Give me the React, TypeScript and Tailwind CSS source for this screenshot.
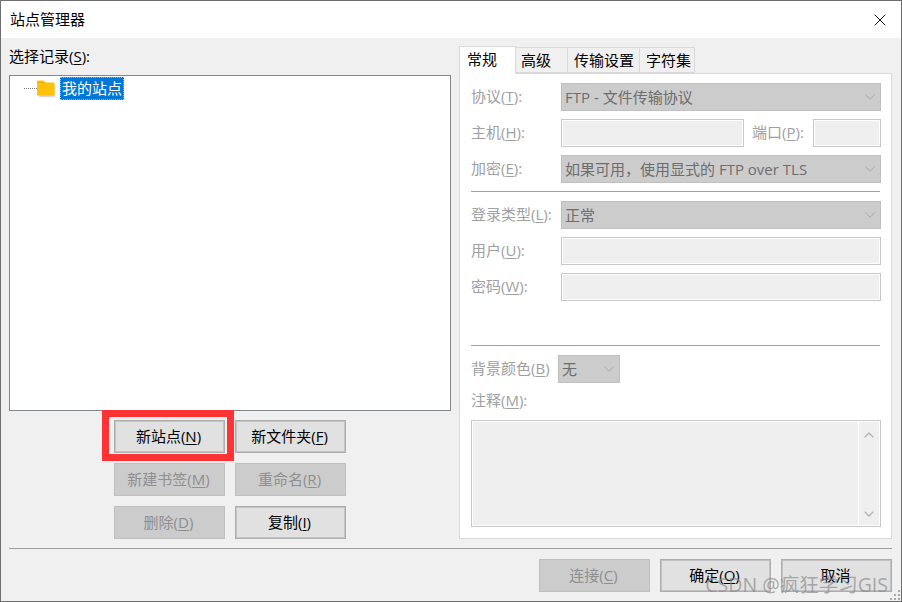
import { ReactNode } from 'react';
import { ChevronDown, ChevronUp, X } from 'lucide-react';

const font = { fontFamily: '"Open Sans", "Noto Sans CJK SC", sans-serif' };

function Hot({ children }: { children: ReactNode }) {
  return <span className="underline underline-offset-2 decoration-1">{children}</span>;
}

function Btn({ disabled, children, className = '' }: { disabled?: boolean; children: ReactNode; className?: string }) {
  return (
    <button
      className={`relative h-[33px] w-[111px] border pr-[2px] text-[15px] leading-none ${
        disabled
          ? 'border-[#bfbfbf] bg-[#cccccc] text-[#8f8f8f]'
          : 'border-[#adadad] bg-[#e1e1e1] text-black shadow-[inset_0_0_0_1px_#c4c4c4]'
      } ${className}`}>
      {children}
    </button>
  );
}

function Label({ children, className = 'w-[90px]' }: { children: ReactNode; className?: string }) {
  return <span className={`shrink-0 pb-[2px] text-[15px] text-[#a0a0a0] ${className}`}>{children}</span>;
}

function Select({ value, className = 'flex-1' }: { value: string; className?: string }) {
  return (
    <div className={`flex h-[28px] items-center justify-between border border-[#bfbfbf] bg-[#cccccc] pl-[3px] pr-[1px] text-[15px] text-[#6d6d6d] ${className}`}>
      <span>{value}</span>
      <ChevronDown size={18} strokeWidth={1} className="text-[#9c9c9c]" />
    </div>
  );
}

function Field({ className = 'flex-1' }: { className?: string }) {
  return <div className={`h-[28px] border border-[#c8c8c8] bg-[#efefef] shadow-[inset_0_0_0_1px_#ffffff] ${className}`} />;
}

function Tab({ active, className, children }: { active?: boolean; className: string; children: ReactNode }) {
  return (
    <div
      className={`flex items-center border border-[#d9d9d9] text-[15px] text-black ${
        active ? 'relative z-10 -mb-px h-[28px] border-b-0 bg-white pb-[3px]' : '-ml-px h-[26px] bg-[#f0f0f0]'
      } ${className}`}>
      {children}
    </div>
  );
}

export default function App() {
  return (
    <div style={font} className="relative flex h-[602px] w-[902px] flex-col overflow-hidden border border-[#6e6e6e] bg-[#f0f0f0]">
      {/* Title bar */}
      <div className="flex h-[37px] shrink-0 items-center justify-between bg-white pl-[9px] pr-[11px] text-[15px] text-black">
        <span className="pb-[1px]">站点管理器</span>
        <X size={20} strokeWidth={1.1} className="text-black" />
      </div>

      <div className="flex flex-1 flex-col pl-[8px] pr-[9px] pt-[8px]">
        <div className="flex gap-[8px]">
          {/* Site tree */}
          <div className="flex w-[442px] flex-col">
            <div className="h-[29px] text-[15px] leading-[20px] text-black">
              选择记录(<Hot>S</Hot>):
            </div>
            <div className="h-[336px] border border-[#828790] bg-white">
              <div className="flex h-[25px] items-center pl-[14px]">
                <div className="w-[13px] border-t border-dotted border-[#777777]" />
                <svg width="19" height="19" viewBox="0 0 19 19" className="shrink-0">
                  <path d="M1 3h6l2 2h9v13H1z" fill="#d9d9d9" transform="translate(1 1) scale(0.96)" />
                  <path d="M0 2.5C0 2 .4 1.500 1 1.500h5.500L8.500 3.500H17.500V16.500H0z" fill="#ffc107" />
                  <path d="M0 3.500h8.500" stroke="#e0a800" strokeWidth="0.6" />
                </svg>
                <span className="ml-[4px] flex h-[23px] items-center border border-dotted border-[#ff9a28] bg-[#0078d7] px-[1px] pb-[1px] text-[15px] text-white">
                  我的站点
                </span>
              </div>
            </div>
            <div className="mt-[9px] grid grid-cols-[111px_111px] justify-center gap-x-[10px] gap-y-[10px]">
              <Btn>
                新站点(<Hot>N</Hot>)
                <span className="absolute -bottom-[9px] -left-[13px] -right-[10px] -top-[11px] border-[7px] border-[#ff3333]" />
              </Btn>
              <Btn>新文件夹(<Hot>F</Hot>)</Btn>
              <Btn disabled>新建书签(<Hot>M</Hot>)</Btn>
              <Btn disabled>重命名(<Hot>R</Hot>)</Btn>
              <Btn disabled>删除(<Hot>D</Hot>)</Btn>
              <Btn>复制(<Hot>I</Hot>)</Btn>
            </div>
          </div>

          {/* Settings tabs */}
          <div className="flex w-[433px] flex-col">
            <div className="flex h-[27px] items-end">
              <Tab active className="w-[57px] pl-[7px]">常规</Tab>
              <Tab className="w-[53px] pl-[5px]">高级</Tab>
              <Tab className="w-[73px] pl-[6px]">传输设置</Tab>
              <Tab className="w-[56px] pl-[6px]">字符集</Tab>
            </div>
            <div className="flex h-[466px] flex-col border border-[#d9d9d9] bg-white pl-[11px] pr-[10px] pt-[9px]">
              <div className="flex flex-col gap-[8px]">
                <div className="flex items-center">
                  <Label>协议(<Hot>T</Hot>):</Label>
                  <Select value="FTP - 文件传输协议" />
                </div>
                <div className="flex items-center">
                  <Label>主机(<Hot>H</Hot>):</Label>
                  <Field className="w-[183px]" />
                  <Label className="ml-[8px] w-[61px]">端口(<Hot>P</Hot>):</Label>
                  <Field className="w-[68px]" />
                </div>
                <div className="flex items-center">
                  <Label>加密(<Hot>E</Hot>):</Label>
                  <Select value="如果可用，使用显式的 FTP over TLS" />
                </div>
              </div>
              <div className="mr-px mt-[8px] h-px bg-[#a0a0a0]" />
              <div className="mt-[9px] flex flex-col gap-[8px]">
                <div className="flex items-center">
                  <Label>登录类型(<Hot>L</Hot>):</Label>
                  <Select value="正常" />
                </div>
                <div className="flex items-center">
                  <Label>用户(<Hot>U</Hot>):</Label>
                  <Field />
                </div>
                <div className="flex items-center">
                  <Label>密码(<Hot>W</Hot>):</Label>
                  <Field />
                </div>
              </div>
              <div className="mr-px mt-[44px] h-px bg-[#a0a0a0]" />
              <div className="mt-[9px] flex items-center">
                <Label className="w-[87px]">背景颜色(<Hot>B</Hot>)</Label>
                <Select value="无" className="w-[62px]" />
              </div>
              <div className="flex h-[37px] items-center">
                <Label>注释(<Hot>M</Hot>):</Label>
              </div>
              <div className="flex h-[107px] justify-end border border-[#c8c8c8] bg-[#efefef] shadow-[inset_0_0_0_1px_#ffffff]">
                <div className="my-[1px] mr-[1px] flex w-[21px] flex-col items-center justify-between border-l border-white pb-[3px] pt-[5px]">
                  <ChevronUp size={16} strokeWidth={1.8} className="text-[#b0b0b0]" />
                  <ChevronDown size={16} strokeWidth={1.8} className="text-[#b0b0b0]" />
                </div>
              </div>
            </div>
          </div>
        </div>

        <div className="mt-[9px] h-px bg-[#a0a0a0]" />
        <div className="mt-[10px] flex justify-end gap-[10px]">
          <Btn disabled>连接(<Hot>C</Hot>)</Btn>
          <Btn>确定(<Hot>O</Hot>)</Btn>
          <Btn>取消</Btn>
        </div>
      </div>

      {/* Watermark over the dialog buttons */}
      <span className="absolute bottom-[4px] right-[13px] text-[19.5px] leading-[24px] text-[#8a8a8a]/70">
        CSDN @疯狂学习GIS
      </span>

      {/* Resize grip */}
      <svg width="12" height="12" viewBox="0 0 12 12" className="absolute bottom-0 right-0" fill="#a8a8a8">
        <rect x="9" y="1" width="2" height="2" />
        <rect x="5" y="5" width="2" height="2" />
        <rect x="9" y="5" width="2" height="2" />
        <rect x="1" y="9" width="2" height="2" />
        <rect x="5" y="9" width="2" height="2" />
        <rect x="9" y="9" width="2" height="2" />
      </svg>
    </div>
  );
}
